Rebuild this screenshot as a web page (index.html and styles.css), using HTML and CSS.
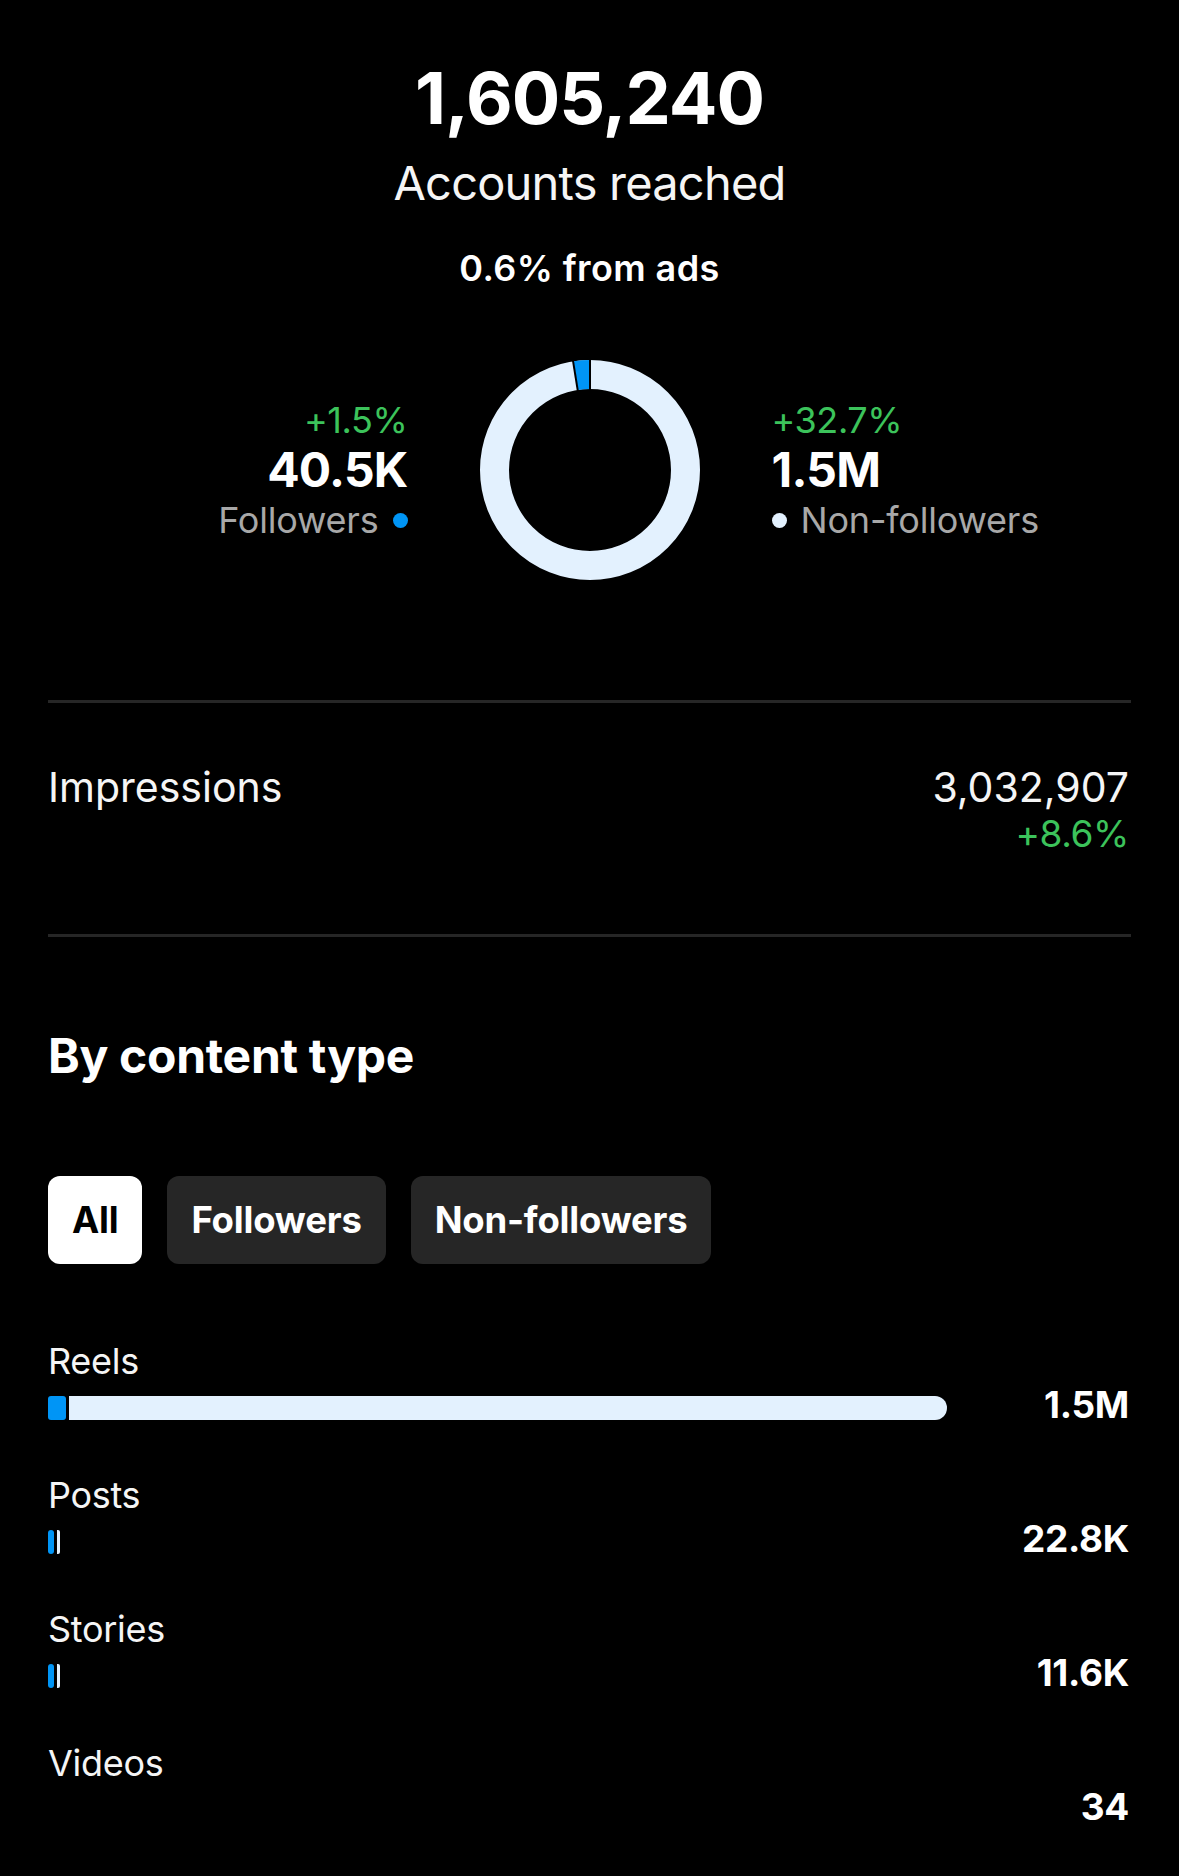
FILE: index.html
```html
<!DOCTYPE html>
<html lang="en">
<head>
<meta charset="utf-8">
<title>Accounts reached</title>
<link rel="stylesheet" href="styles.css">
</head>
<body>
<main class="page">
  <section class="summary">
    <div class="total">1,605,240</div>
    <div class="total-label">Accounts reached</div>
    <div class="ads">0.6% from ads</div>
  </section>

  <section class="split">
    <div class="side side-left">
      <div class="delta">+1.5%</div>
      <div class="side-value">40.5K</div>
      <div class="side-label">Followers <span class="dot dot-blue"></span></div>
    </div>
    <svg class="donut" width="220" height="220" viewBox="0 0 220 220">
      <circle cx="110" cy="110" r="95.5" fill="none" stroke="#e3f1fe" stroke-width="29"/>
      <path d="M95.8 15.6 A95.5 95.5 0 0 1 110 14.5" fill="none" stroke="#0095f6" stroke-width="29"/>
      <line x1="110" y1="-1" x2="110" y2="31" stroke="#000" stroke-width="2"/>
      <line x1="92.9" y1="0.2" x2="97.9" y2="31.4" stroke="#000" stroke-width="2"/>
    </svg>
    <div class="side side-right">
      <div class="delta">+32.7%</div>
      <div class="side-value">1.5M</div>
      <div class="side-label"><span class="dot dot-light"></span> Non-followers</div>
    </div>
  </section>

  <div class="divider divider-top"></div>

  <section class="impressions">
    <div class="imp-label">Impressions</div>
    <div class="imp-values">
      <div class="imp-value">3,032,907</div>
      <div class="imp-delta">+8.6%</div>
    </div>
  </section>

  <div class="divider divider-bottom"></div>

  <h2 class="heading">By content type</h2>

  <div class="chips">
    <div class="chip chip-active">All</div>
    <div class="chip">Followers</div>
    <div class="chip">Non-followers</div>
  </div>

  <section class="types">
    <div class="type">
      <div class="type-label">Reels</div>
      <div class="type-row">
        <div class="track">
          <span class="seg seg-blue" style="width:18px"></span>
          <span class="seg seg-light seg-end" style="width:878px"></span>
        </div>
        <div class="type-value">1.5M</div>
      </div>
    </div>
    <div class="type">
      <div class="type-label">Posts</div>
      <div class="type-row">
        <div class="track">
          <span class="seg seg-blue" style="width:6px"></span>
          <span class="seg seg-light" style="width:3px"></span>
        </div>
        <div class="type-value">22.8K</div>
      </div>
    </div>
    <div class="type">
      <div class="type-label">Stories</div>
      <div class="type-row">
        <div class="track">
          <span class="seg seg-blue" style="width:6px"></span>
          <span class="seg seg-light" style="width:3px"></span>
        </div>
        <div class="type-value">11.6K</div>
      </div>
    </div>
    <div class="type">
      <div class="type-label">Videos</div>
      <div class="type-row">
        <div class="track"></div>
        <div class="type-value">34</div>
      </div>
    </div>
  </section>
</main>
</body>
</html>
```

FILE: styles.css
```css
* { box-sizing: border-box; }

html, body {
  margin: 0;
  padding: 0;
  background: #000;
}

body {
  font-family: Inter, "Noto Sans", "Liberation Sans", sans-serif;
  color: #f5f5f5;
  width: 1179px;
  min-height: 1876px;
}

.page {
  padding: 54px 48px 0 48px;
}

.summary {
  display: flex;
  flex-direction: column;
  align-items: center;
}

.total {
  font-size: 72px;
  line-height: 88px;
  font-weight: 700;
  letter-spacing: -1px;
  color: #fff;
}

.total-label {
  margin-top: 13px;
  font-size: 47px;
  line-height: 56px;
  font-weight: 400;
  letter-spacing: -0.8px;
}

.ads {
  margin-top: 36px;
  font-size: 36px;
  line-height: 42px;
  font-weight: 600;
  color: #fff;
  letter-spacing: 0.4px;
}

.split {
  margin-top: 71px;
  display: grid;
  grid-template-columns: 1fr 220px 1fr;
  column-gap: 72px;
  align-items: center;
}

.donut {
  display: block;
}

.side {
  display: flex;
  flex-direction: column;
}

.side-left { align-items: flex-end; text-align: right; }
.side-right { align-items: flex-start; }

.delta {
  font-size: 36px;
  line-height: 42px;
  color: #3cc35b;
  letter-spacing: -0.4px;
}

.side-value {
  font-size: 48px;
  line-height: 58px;
  font-weight: 700;
  color: #fff;
  letter-spacing: -0.8px;
}

.side-label {
  font-size: 36px;
  line-height: 42px;
  color: #a8a8a8;
  display: flex;
  align-items: center;
  gap: 14px;
  letter-spacing: -0.2px;
}

.dot {
  display: inline-block;
  width: 15px;
  height: 15px;
  border-radius: 50%;
}

.dot-blue { background: #0095f6; }
.dot-light { background: #e3f1fe; }

.divider {
  height: 3px;
  background: #262626;
}

.divider-top { margin-top: 120px; }

.impressions {
  margin-top: 60px;
  display: flex;
  justify-content: space-between;
  align-items: flex-start;
}

.imp-label {
  font-size: 41px;
  line-height: 48px;
  letter-spacing: 0;
}

.imp-values {
  text-align: right;
  margin-right: 2px;
}

.imp-value {
  font-size: 41px;
  line-height: 48px;
  letter-spacing: 0;
}

.imp-delta {
  font-size: 37px;
  line-height: 46px;
  color: #3cc35b;
  letter-spacing: -0.4px;
}

.divider-bottom { margin-top: 77px; }

.heading {
  margin: 90px 0 0 0;
  font-size: 48px;
  line-height: 58px;
  font-weight: 700;
  color: #fff;
  letter-spacing: -0.3px;
}

.chips {
  margin-top: 91px;
  display: flex;
  gap: 25px;
}

.chip {
  height: 88px;
  padding: 0 24px;
  border-radius: 12px;
  background: #262626;
  color: #fff;
  font-size: 36.5px;
  font-weight: 700;
  display: flex;
  align-items: center;
  letter-spacing: -0.2px;
}

.chip-active {
  background: #fff;
  color: #000;
}

.types {
  margin-top: 75px;
  display: flex;
  flex-direction: column;
  gap: 53px;
}

.type-label {
  font-size: 36px;
  line-height: 44px;
  letter-spacing: -0.3px;
}

.type-row {
  margin-top: 13px;
  height: 24px;
  display: flex;
  align-items: center;
  justify-content: space-between;
}

.track {
  width: 900px;
  height: 24px;
  display: flex;
  gap: 3px;
}

.seg {
  display: block;
  height: 24px;
}

.seg-blue {
  background: #0095f6;
  border-radius: 3px;
}

.seg-light {
  background: #e3f1fe;
  border-radius: 0 2px 2px 0;
}

.seg-end {
  border-radius: 0 12px 12px 0;
}

.type-value {
  font-size: 37px;
  line-height: 24px;
  padding-bottom: 7px;
  margin-right: 2px;
  font-weight: 700;
  color: #fff;
  letter-spacing: -0.3px;
}
```
